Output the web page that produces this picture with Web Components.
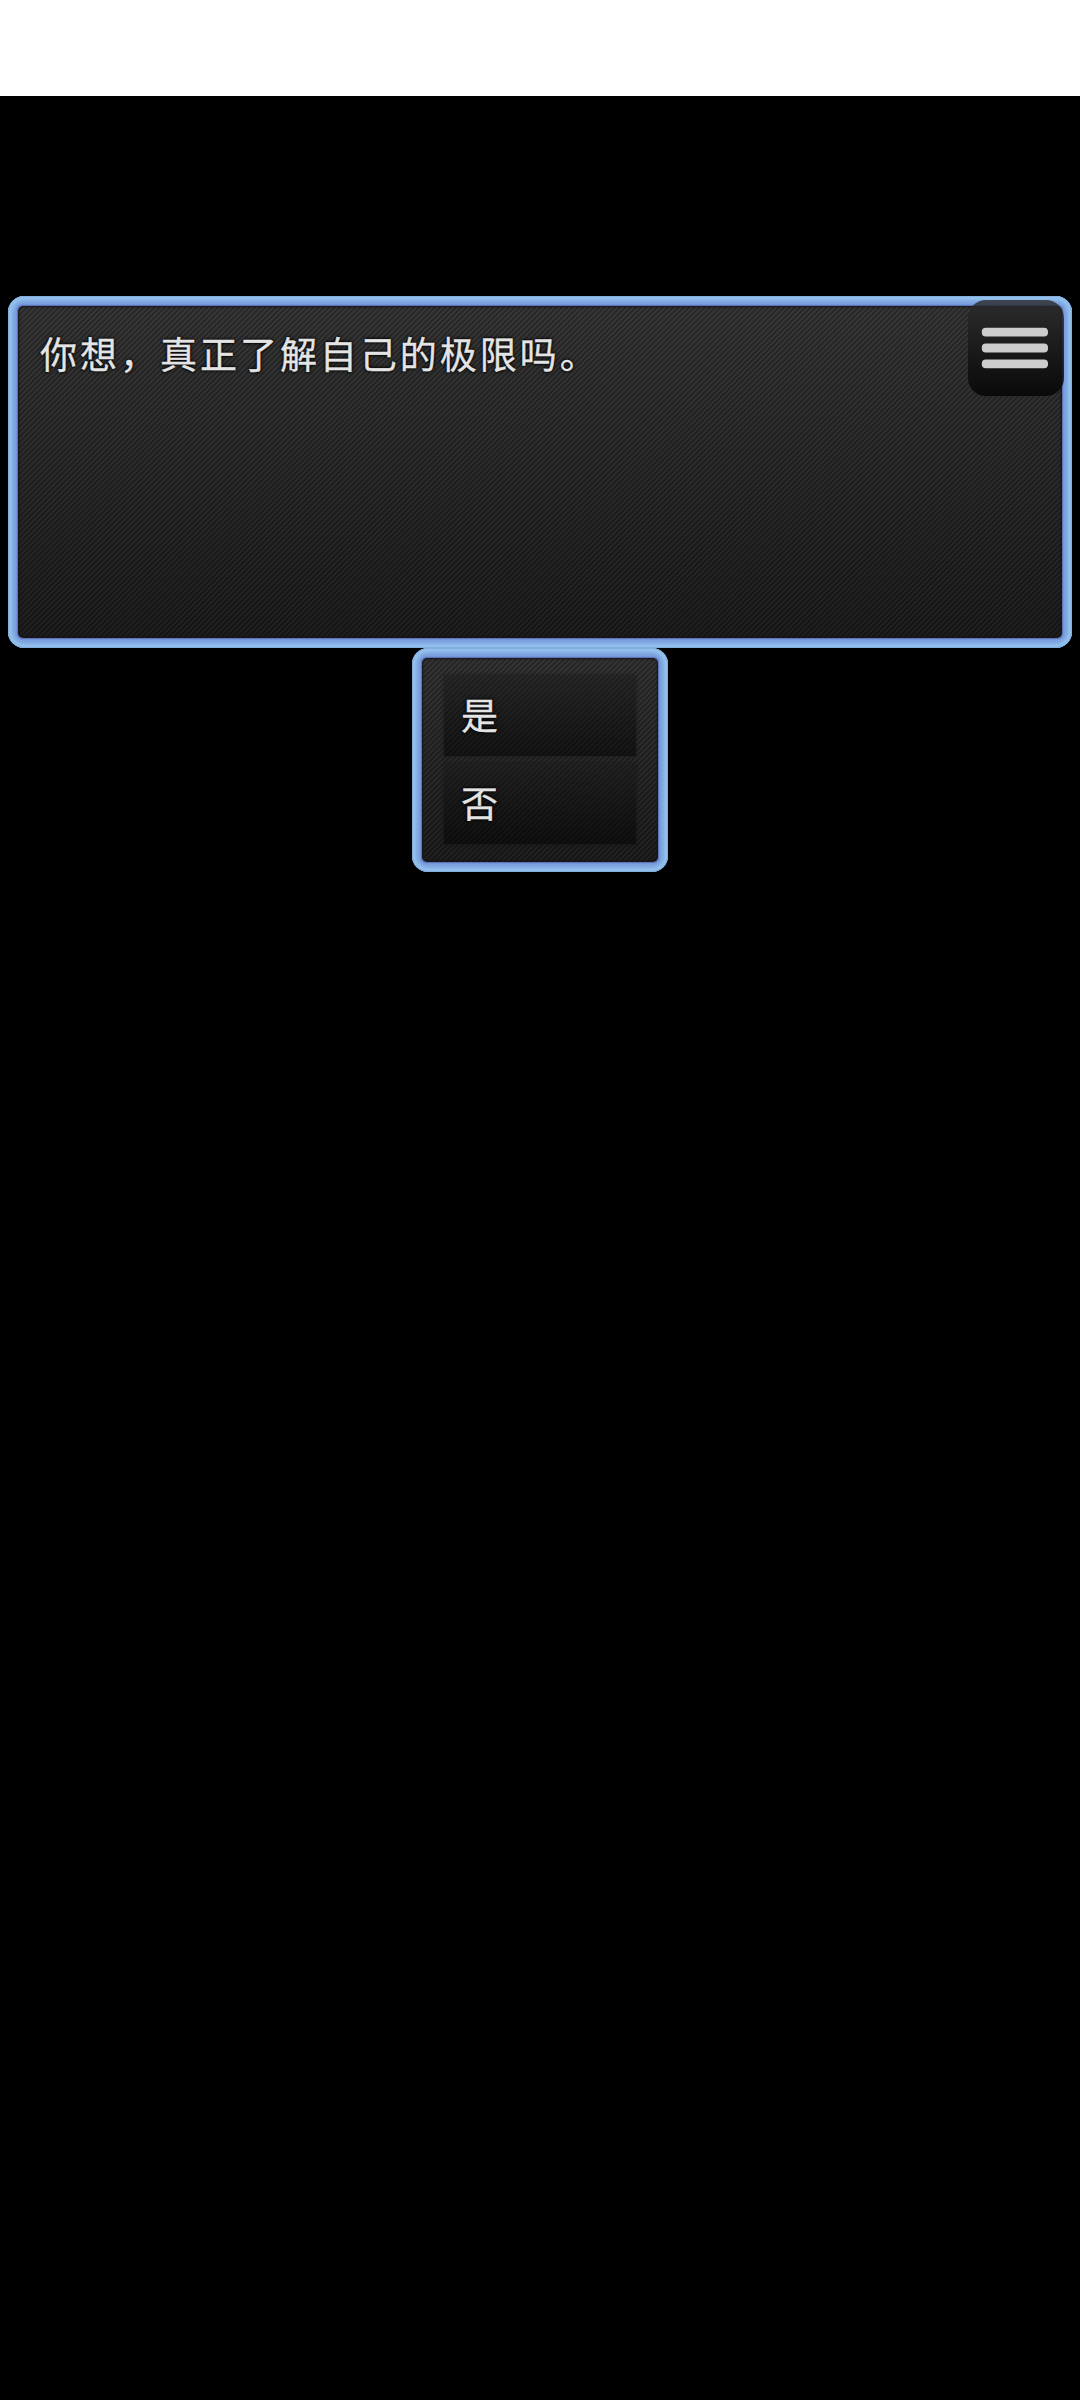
<!DOCTYPE html>
<html lang="zh-CN">
<head>
<meta charset="utf-8">
<title>对话</title>
<style>
html,body{margin:0;height:100%;background:#000}
</style>
</head>
<body>
<game-screen>
  <message-window>你想，真正了解自己的极限吗。</message-window>
  <menu-button slot="menu"></menu-button>
  <choice-window slot="choices"><choice-item>是</choice-item><choice-item>否</choice-item></choice-window>
</game-screen>
<script>
const frame = `
  :host{box-sizing:border-box;position:relative;display:block;border-radius:16px;
    padding:10px;
    background:#80a8e2;
    box-shadow:inset 0 0 1px 1px #80addc,inset 0 0 3px 4px #95c3ed}
  .pane{box-sizing:border-box;height:100%;border-radius:5px;
    box-shadow:0 0 1px .5px #5d72b4,0 0 3px 2px #7293da,inset 0 0 2px 1px #15151c;
    background:repeating-linear-gradient(135deg,rgba(0,0,0,.3) 0,rgba(255,255,255,.045) 1.87px,rgba(0,0,0,.3) 3.743px),
      linear-gradient(var(--top,#333),var(--bottom,#181818))}`;
const type = `font:37px/48px "Noto Sans CJK SC",sans-serif;letter-spacing:2.98px;color:#e4e4e4;
  -webkit-text-stroke:.35px #e4e4e4;
  text-shadow:0 0 2px #000,0 0 3px #000,0 0 4px rgba(0,0,0,.7);white-space:nowrap;`;

function define(name, markup) {
  customElements.define(name, class extends HTMLElement {
    constructor() {
      super();
      this.attachShadow({mode: 'open'}).innerHTML = markup;
    }
  });
}

define('game-screen', `<style>
  :host{display:flex;flex-direction:column;width:1080px;height:2400px;overflow:hidden;background:#000}
  .status{height:96px;background:#fff;flex:none}
  main{position:relative;display:flex;flex-direction:column;align-items:center;padding-top:200px}
  ::slotted([slot=menu]){position:absolute;top:204px;right:16px}
</style><div class="status"></div><main><slot></slot><slot name="choices"></slot><slot name="menu"></slot></main>`);

define('message-window', `<style>${frame}
  :host{width:1064px;height:352px}
  .pane{padding:23px 22px}
  p{margin:0;${type}}
</style><div class="pane"><p><slot></slot></p></div>`);

define('choice-window', `<style>${frame}
  :host{width:256px;height:224px;--top:#303030;--bottom:#191919}
  .pane{display:flex;flex-direction:column;gap:7px;padding:17px 22px}
</style><div class="pane"><slot></slot></div>`);

define('choice-item', `<style>
  :host{box-sizing:border-box;display:flex;align-items:center;height:81px;padding:0 17px 4px;
    background:linear-gradient(rgba(24,24,24,.4),rgba(0,0,0,.5));
    box-shadow:0 0 3px rgba(10,10,10,.4);${type}}
</style><span><slot></slot></span>`);

define('menu-button', `<style>
  :host{box-sizing:border-box;display:block;width:96px;height:96px;border-radius:18px;
    background:linear-gradient(rgba(43,43,43,.8),rgba(4,4,4,.85))}
  svg{display:block}
</style><svg width="96" height="96" viewBox="0 0 96 96" fill="#ccc">
  <rect x="13.8" y="27.7" width="66.2" height="8.8" rx="4"/>
  <rect x="13.8" y="43.6" width="66.2" height="8.8" rx="4"/>
  <rect x="13.8" y="59.5" width="66.2" height="8.8" rx="4"/>
</svg>`);
</script>
</body>
</html>
